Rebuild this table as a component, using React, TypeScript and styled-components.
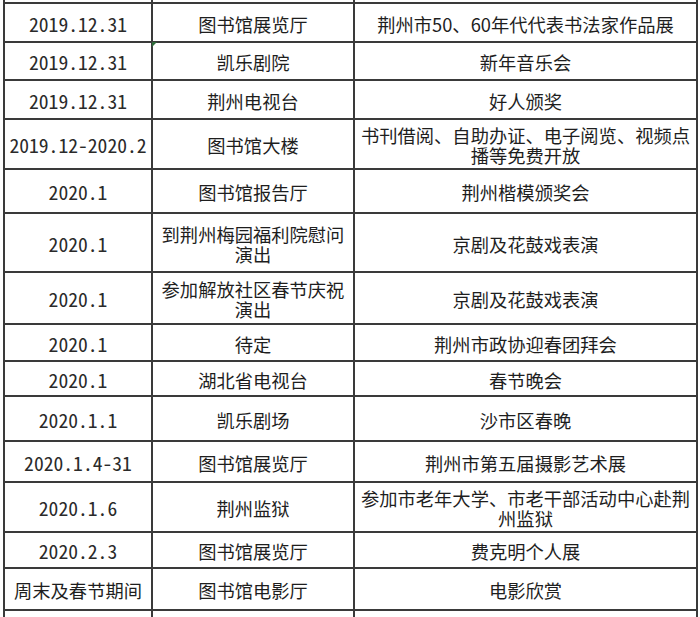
import { FC } from 'react'
import styled, { createGlobalStyle } from 'styled-components'

const GlobalStyle = createGlobalStyle`
  html, body {
    margin: 0;
    padding: 0;
    background: #ffffff;
  }
  body {
    width: 700px;
    height: 617px;
    overflow: hidden;
  }
`;

type Item = {
  date: string;
  place: string;
  event: string;
  height: number;
  mark?: boolean;
};

const items: Item[] = [
  { date: '2019.12.31', place: '图书馆展览厅', event: '荆州市50、60年代代表书法家作品展', height: 39 },
  { date: '2019.12.31', place: '凯乐剧院', event: '新年音乐会', height: 38, mark: true },
  { date: '2019.12.31', place: '荆州电视台', event: '好人颁奖', height: 39 },
  { date: '2019.12-2020.2', place: '图书馆大楼', event: '书刊借阅、自助办证、电子阅览、视频点播等免费开放', height: 50 },
  { date: '2020.1', place: '图书馆报告厅', event: '荆州楷模颁奖会', height: 44 },
  { date: '2020.1', place: '到荆州梅园福利院慰问演出', event: '京剧及花鼓戏表演', height: 59 },
  { date: '2020.1', place: '参加解放社区春节庆祝演出', event: '京剧及花鼓戏表演', height: 52 },
  { date: '2020.1', place: '待定', event: '荆州市政协迎春团拜会', height: 37 },
  { date: '2020.1', place: '湖北省电视台', event: '春节晚会', height: 35 },
  { date: '2020.1.1', place: '凯乐剧场', event: '沙市区春晚', height: 45 },
  { date: '2020.1.4-31', place: '图书馆展览厅', event: '荆州市第五届摄影艺术展', height: 41 },
  { date: '2020.1.6', place: '荆州监狱', event: '参加市老年大学、市老干部活动中心赴荆州监狱', height: 50 },
  { date: '2020.2.3', place: '图书馆展览厅', event: '费克明个人展', height: 36 },
  { date: '周末及春节期间', place: '图书馆电影厅', event: '电影欣赏', height: 42 },
];

const Sheet = styled.table`
  margin-left: 3px;
  width: 695px;
  border-collapse: collapse;
  table-layout: fixed;
  font-family: "Noto Sans CJK SC", "Noto Sans", sans-serif;
  font-size: 18.3px;
  line-height: 20px;
  color: #1e1e1e;
`;

const Row = styled.tr<{ $h: number }>`
  height: ${({ $h }) => $h}px;
`;

const Cell = styled.td<{ $mono?: boolean }>`
  position: relative;
  border: 2px solid #3a3a3a;
  padding: 2px 4px 0;
  text-align: center;
  vertical-align: middle;
  white-space: ${({ $mono }) => $mono ? 'nowrap' : 'normal'};
  font-family: ${({ $mono }) => $mono
    ? '"Noto Sans Mono CJK SC", "Noto Sans CJK SC", monospace'
    : '"Noto Sans CJK SC", "Noto Sans", sans-serif'};
  font-size: ${({ $mono }) => $mono ? '19.6px' : '18.3px'};
  color: ${({ $mono }) => $mono ? '#2a2a2a' : '#1e1e1e'};
`;

const EdgeCell = styled.td<{ $bottom?: boolean }>`
  border-left: 2px solid #3a3a3a;
  border-right: 2px solid #3a3a3a;
  ${({ $bottom }) => $bottom ? 'border-bottom: none;' : 'border-top: none;'}
  padding: 0;
  font-size: 0;
  line-height: 0;
`;

const Mark = styled.span`
  position: absolute;
  left: -1px;
  top: -1px;
  width: 0;
  height: 0;
  border-top: 5px solid #2f6b3a;
  border-right: 5px solid transparent;
`;

const isDate = (s: string) => /^[0-9.\-]+$/.test(s);

const App: FC = () => {
  return (
    <>
      <GlobalStyle />
      <Sheet>
        <colgroup>
          <col style={{ width: 148 }} />
          <col style={{ width: 202 }} />
          <col style={{ width: 343 }} />
        </colgroup>
        <tbody>
          <Row $h={3}>
            <EdgeCell />
            <EdgeCell />
            <EdgeCell />
          </Row>
          {items.map((item, i) => (
            <Row key={i} $h={item.height}>
              <Cell $mono={isDate(item.date)}>{item.date}</Cell>
              <Cell>
                {item.mark && <Mark />}
                {item.place}
              </Cell>
              <Cell>{item.event}</Cell>
            </Row>
          ))}
          <Row $h={8}>
            <EdgeCell $bottom />
            <EdgeCell $bottom />
            <EdgeCell $bottom />
          </Row>
        </tbody>
      </Sheet>
    </>
  )
}

export default App
